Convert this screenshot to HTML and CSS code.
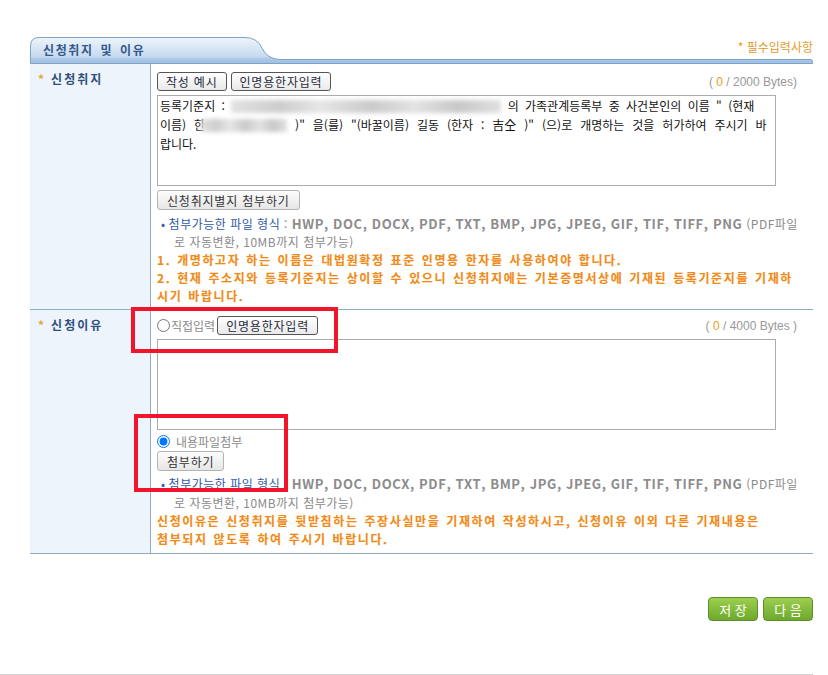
FILE: index.html
```html
<!DOCTYPE html>
<html lang="ko">
<head>
    <meta charset="UTF-8">
    <meta name="viewport" content="width=device-width, initial-scale=1.0">
    <title>신청취지 및 이유</title>
    <link rel="stylesheet" href="styles.css">
</head>
<body>
    <div class="wrap">
        <div class="head">
            <svg class="head-bg" width="783" height="27" viewBox="0 0 783 27">
                <defs>
                    <linearGradient id="tabg" x1="0" y1="0" x2="0" y2="1">
                        <stop offset="0" stop-color="#eef4fb"/>
                        <stop offset="0.74" stop-color="#c6daef"/>
                        <stop offset="0.82" stop-color="#abc8e7"/>
                        <stop offset="1" stop-color="#a0bfe2"/>
                    </linearGradient>
                </defs>
                <path d="M0.5 26.5 V9 Q0.5 0.5 9 0.5 H215 Q227 0.5 232 11 Q237 22 250 22.5 H780 Q782.5 22.5 782.5 24.5 V26.5 Z" fill="url(#tabg)" stroke="#7ea2c8"/>
            </svg>
            <div class="head-row">
                <span class="head-title">신청취지 및 이유</span>
                <span class="req">* 필수입력사항</span>
            </div>
        </div>

        <div class="form">
            <div class="row">
                <div class="label"><i>*</i>신청취지</div>
                <div class="cell cell-first">
                    <div class="tools">
                        <button class="btn">작성 예시</button>
                        <button class="btn">인명용한자입력</button>
                        <span class="count">( <em>0</em> / 2000 Bytes)</span>
                    </div>
                    <div class="textbox">
                        <div>등록기준지 : <span class="blur b1"></span> 의 가족관계등록부 중 사건본인의 이름 " (현재</div>
                        <div class="wide">이름) 한<span class="blur b2"></span> )" 을(를) "(바꿀이름) 길동 (한자 : 吉仝 )" (으)로 개명하는 것을 허가하여 주시기 바</div>
                        <div>랍니다.</div>
                    </div>
                    <button class="btn btn-light btn-attach">신청취지별지 첨부하기</button>
                    <div class="types">
                        <div><span class="dot">•</span><span class="types-title">첨부가능한 파일 형식</span> : <b>HWP, DOC, DOCX, PDF, TXT, BMP, JPG, JPEG, GIF, TIF, TIFF, PNG</b> (PDF파일</div>
                        <div class="types-more">로 자동변환, 10MB까지 첨부가능)</div>
                    </div>
                    <div class="warn">
                        <div>1. 개명하고자 하는 이름은 대법원확정 표준 인명용 한자를 사용하여야 합니다.</div>
                        <div>2. 현재 주소지와 등록기준지는 상이할 수 있으니 신청취지에는 기본증명서상에 기재된 등록기준지를 기재하</div>
                        <div>시기 바랍니다.</div>
                    </div>
                </div>
            </div>

            <div class="row">
                <div class="label"><i>*</i>신청이유</div>
                <div class="cell cell-second">
                    <div class="tools">
                        <label class="choice"><input type="radio" name="reason">직접입력</label>
                        <button class="btn btn-han">인명용한자입력</button>
                        <span class="count">( <em>0</em> / 4000 Bytes )</span>
                    </div>
                    <div class="textbox"></div>
                    <label class="choice choice-file"><input type="radio" name="reason" checked>내용파일첨부</label>
                    <button class="btn btn-light btn-file">첨부하기</button>
                    <div class="types types-second">
                        <div><span class="dot">•</span><span class="types-title">첨부가능한 파일 형식</span> : <b>HWP, DOC, DOCX, PDF, TXT, BMP, JPG, JPEG, GIF, TIF, TIFF, PNG</b> (PDF파일</div>
                        <div class="types-more">로 자동변환, 10MB까지 첨부가능)</div>
                    </div>
                    <div class="warn">
                        <div>신청이유은 신청취지를 뒷받침하는 주장사실만을 기재하여 작성하시고, 신청이유 이외 다른 기재내용은</div>
                        <div>첨부되지 않도록 하여 주시기 바랍니다.</div>
                    </div>
                </div>
            </div>
        </div>

        <div class="actions">
            <button class="btn-green">저 장</button>
            <button class="btn-green">다 음</button>
        </div>
    </div>
    <div class="foot"></div>

    <div class="mark mark-1"></div>
    <div class="mark mark-2"></div>
</body>
</html>
```

FILE: styles.css
```css
body {
    margin: 0;
    font-family: "Noto Sans CJK KR", "Liberation Sans", sans-serif;
    font-size: 12px;
    color: #222;
    background: #fff;
}
.wrap {
    width: 783px;
    margin-left: 30px;
    padding-top: 37px;
}
.head {
    display: grid;
    height: 27px;
}
.head-bg,
.head-row {
    grid-area: 1 / 1;
}
.head-row {
    display: flex;
    justify-content: space-between;
    align-items: flex-start;
}
.head-title {
    margin: 4px 0 0 13px;
    font-size: 12px;
    font-weight: bold;
    letter-spacing: 1.6px;
    word-spacing: 2px;
    line-height: 18px;
    color: #35598a;
}
.req {
    margin-top: 2px;
    line-height: 16px;
    color: #e29a2c;
}
.form {
    border-bottom: 1px solid #8eabc7;
}
.row {
    display: grid;
    grid-template-columns: 121px 1fr;
}
.row + .row {
    border-top: 1px solid #8eabc7;
}
.label {
    background: #eef4fb;
    border-right: 1px solid #8eabc7;
    padding: 6px 0 0 8px;
    font-size: 12px;
    font-weight: bold;
    letter-spacing: 2px;
    line-height: 18px;
    color: #2d4f7d;
}
.label i {
    font-style: normal;
    color: #e9a23a;
    margin-right: 5px;
}
.cell {
    padding: 0 13px 4px 6px;
}
.cell-first {
    padding-top: 8px;
}
.cell-second {
    padding-top: 6px;
    padding-bottom: 5px;
}
.tools {
    display: flex;
    align-items: center;
    height: 19px;
}
.count {
    margin-left: auto;
    margin-right: 3px;
    font-family: "Liberation Sans", sans-serif;
    font-size: 12px;
    color: #999;
}
.count em {
    font-style: normal;
    color: #e6a020;
}
.btn {
    height: 19px;
    padding: 0 8px;
    margin-right: 4px;
    border: 1px solid #555;
    border-radius: 3px;
    background: linear-gradient(#ffffff, #e9e9e9);
    font-family: inherit;
    font-size: 12px;
    letter-spacing: 0.8px;
    line-height: 15px;
    color: #1e2a3a;
    cursor: pointer;
}
.btn-light {
    display: block;
    height: 20px;
    padding: 0 9px;
    border-color: #b4b4b4;
    background: linear-gradient(#fdfdfd, #e6e6e6);
    color: #333;
}
.btn-attach {
    margin-top: 4px;
}
.btn-file {
    margin-top: 1px;
}
.textbox {
    box-sizing: border-box;
    width: 619px;
    height: 91px;
    margin-top: 4px;
    padding: 0 9px 0 2px;
    border: 1px solid #ababab;
    font-size: 12px;
    word-spacing: 3px;
    line-height: 19px;
    color: #111;
    white-space: nowrap;
}
.textbox .wide {
    word-spacing: 4.6px;
}
.blur {
    display: inline-block;
    height: 13px;
    vertical-align: -2px;
    background: linear-gradient(90deg, #e2e2e2, #cdcdcd 18%, #e6e6e6 33%, #cacaca 52%, #e3e3e3 68%, #c8c8c8 84%, #e0e0e0);
    filter: blur(2px);
}
.b1 {
    width: 270px;
}
.b2 {
    width: 86px;
    margin-left: -4px;
}
.types {
    margin-top: 5px;
    line-height: 18px;
    letter-spacing: 0.5px;
    color: #8a8a8a;
    white-space: nowrap;
}
.types-second {
    margin-top: 3px;
    line-height: 19px;
}
.types b {
    font-size: 13px;
    letter-spacing: 0.6px;
    color: #8c8c8c;
}
.dot {
    color: #2f62ad;
    margin: 0 3px 0 4px;
}
.types-title {
    color: #2f5aa6;
}
.types-more {
    padding-left: 17px;
}
.warn {
    font-weight: bold;
    letter-spacing: 1.6px;
    word-spacing: 1px;
    line-height: 18px;
    color: #f08a1e;
    text-shadow: 0 0 1px #fde3b8;
    white-space: nowrap;
}
.choice {
    display: flex;
    align-items: center;
    font-size: 12px;
    color: #8a8a8a;
}
.choice input {
    width: 13px;
    height: 13px;
    margin: 0 1px 0 0;
}
.choice-file {
    height: 18px;
    margin-top: 2px;
}
.choice-file input {
    margin-right: 6px;
}
.btn-han {
    margin-left: 2px;
}
.actions {
    display: flex;
    justify-content: flex-end;
    gap: 5px;
    margin-top: 43px;
}
.btn-green {
    width: 50px;
    height: 24px;
    border: 1px solid #5e8f2d;
    border-radius: 4px;
    background: linear-gradient(#9ccf4e, #6ea82c);
    font-family: inherit;
    font-size: 13px;
    color: #fff;
    cursor: pointer;
}
.foot {
    width: 813px;
    margin-top: 53px;
    border-top: 2px solid #d2d2d2;
}
.mark {
    position: absolute;
    border: 4px solid #f2142b;
}
.mark-1 {
    left: 131px;
    top: 307px;
    width: 199px;
    height: 38px;
}
.mark-2 {
    left: 134px;
    top: 414px;
    width: 146px;
    height: 70px;
}
```
